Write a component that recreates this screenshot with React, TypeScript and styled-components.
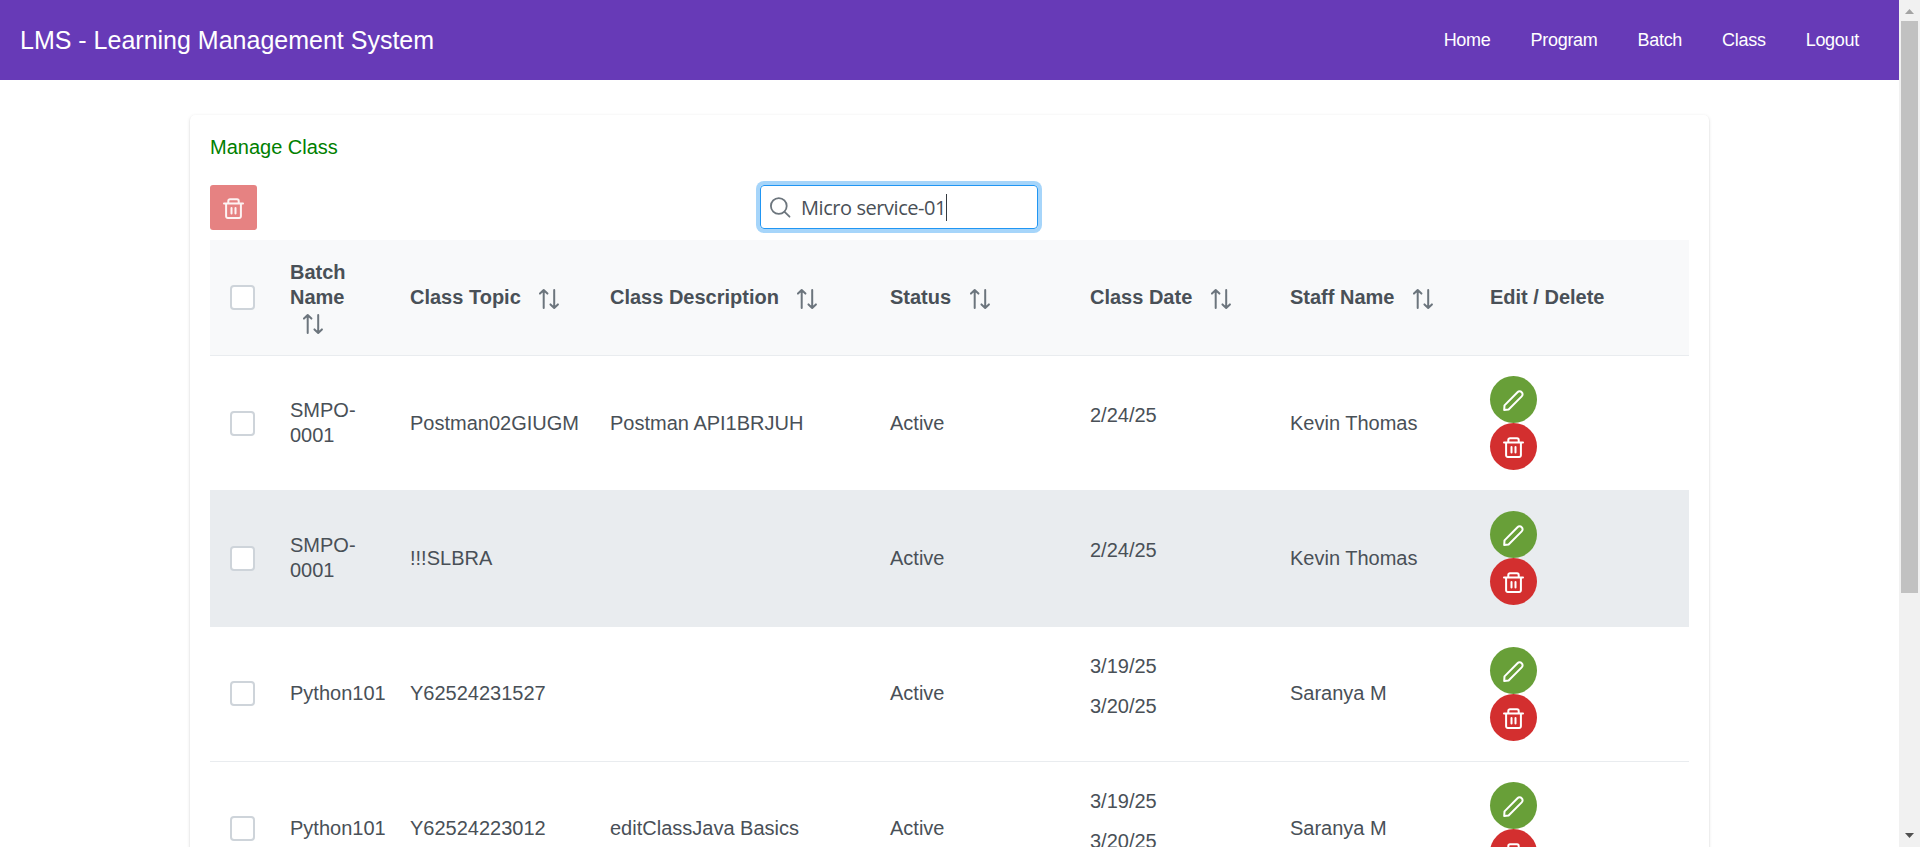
import React from 'react';
import styled, { createGlobalStyle } from 'styled-components';

const GlobalStyle = createGlobalStyle`
  * { box-sizing: border-box; }
  html, body { margin: 0; height: 100%; overflow: hidden; background: #fff; }
  body { font-family: 'Liberation Sans', Arial, sans-serif; font-size: 20px; color: #495057; }
`;

const Shell = styled.div`
  display: flex;
  width: 100%;
  height: 100vh;
  overflow: hidden;
`;

const Page = styled.div`
  flex: 1;
  min-width: 0;
  height: 100%;
  overflow: hidden;
`;

const Toolbar = styled.header`
  display: flex;
  align-items: center;
  justify-content: space-between;
  height: 80px;
  padding: 0 20px;
  background: #673ab7;
  color: #fff;
`;

const Brand = styled.h1`
  margin: 0;
  font-size: 25px;
  font-weight: 400;
  line-height: 40px;
  white-space: nowrap;
`;

const Nav = styled.nav`
  display: flex;
`;

const NavLink = styled.a`
  padding: 0 20px;
  font-size: 18px;
  letter-spacing: -0.29px;
  line-height: 45px;
  white-space: nowrap;
`;

const Card = styled.main`
  width: 1519px;
  height: 1100px;
  margin: 35px 0 0 190px;
  padding: 20px;
  border-radius: 5px;
  background: #fff;
  box-shadow: 0 2.5px 1.25px -1.25px rgba(0, 0, 0, 0.2), 0 1.25px 1.25px rgba(0, 0, 0, 0.14), 0 1.25px 3.75px rgba(0, 0, 0, 0.12);
`;

const CardTitle = styled.div`
  height: 50px;
  color: green;
  line-height: 24px;
`;

const Actions = styled.div`
  display: flex;
  align-items: flex-start;
  height: 55px;
`;

const BulkDelete = styled.button`
  display: flex;
  align-items: center;
  justify-content: center;
  width: 47px;
  height: 45px;
  padding: 1px 0 0;
  border: 0;
  border-radius: 3px;
  background: #e68282;
  color: #fdf3f3;
`;

const SearchBox = styled.label`
  display: flex;
  align-items: center;
  width: 278px;
  height: 44px;
  margin-left: 503px;
  padding-left: 9px;
  border: 1px solid #2196f3;
  border-radius: 4px;
  box-shadow: 0 0 0 4px #a6d5fa;
  color: #6c757d;
`;

const SearchText = styled.span`
  margin-left: 10px;
  padding-top: 2px;
  color: #495057;
  font-family: 'Open Sans', 'Noto Sans', sans-serif;
  font-size: 20px;
  letter-spacing: -0.44px;
  line-height: 26px;
  white-space: nowrap;
`;

const Caret = styled.i`
  width: 1px;
  height: 27px;
  background: #343a40;
`;

const columns = '60px 120px 200px 280px 200px 200px 200px 219px';

const HeadRow = styled.div`
  display: grid;
  grid-template-columns: ${columns};
  align-items: center;
  height: 116px;
  background: #f8f9fa;
  border-bottom: 1px solid #e9ecef;
  font-weight: 700;
`;

const Cell = styled.div`
  padding: 0 20px;
  line-height: 25px;
`;

const Dates = styled.div`
  display: flex;
  flex-direction: column;
  gap: 15px;
  padding: 0 20px 16px;
  line-height: 25px;
`;

const Row = styled.div<{ $height: number; $lift: number; $active?: boolean }>`
  display: grid;
  grid-template-columns: ${columns};
  align-items: center;
  height: ${(p) => p.$height}px;
  padding-bottom: ${(p) => p.$height - 135}px;
  border-bottom: 1px solid #e9ecef;
  background: ${(p) => (p.$active ? '#e9ecef' : '#fff')};

  ${Cell} {
    margin-bottom: ${(p) => p.$lift * 2}px;
  }
`;

const HeadCell = styled(Cell)<{ $wrap?: boolean }>`
  padding-right: 0;
  white-space: ${(p) => (p.$wrap ? 'normal' : 'nowrap')};
  width: ${(p) => (p.$wrap ? '100px' : 'auto')};
`;

const SortIcon = styled.svg<{ $indent: number }>`
  width: 20px;
  height: 20px;
  margin-left: ${(p) => p.$indent}px;
  vertical-align: -5px;
  color: #6c757d;
`;

const Checkbox = styled.div`
  width: 25px;
  height: 25px;
  border: 2px solid #ced4da;
  border-radius: 4px;
  background: #fff;
`;

const Buttons = styled.div`
  padding: 0 20px;
`;

const RoundButton = styled.button<{ $tone: string }>`
  display: flex;
  align-items: center;
  justify-content: center;
  width: 47px;
  height: 47px;
  padding: 1px 0 0;
  border: 0;
  border-radius: 50%;
  background: ${(p) => p.$tone};
  color: #fff;
`;

const ScrollTrack = styled.aside`
  display: flex;
  flex-direction: column;
  align-items: center;
  width: 21px;
  height: 100%;
  background: #f1f1f1;
`;

const ScrollThumb = styled.div`
  width: 17px;
  height: 572px;
  background: #c1c1c1;
`;

const ScrollArrow = styled.svg`
  display: block;
  width: 21px;
  height: 21px;
`;

const Spacer = styled.div`
  flex: 1;
`;

const TrashIcon = () => (
  <svg width="21" height="21" viewBox="0 0 21 21" fill="none" stroke="currentColor" strokeWidth="2" strokeLinecap="round" strokeLinejoin="round">
    <path d="M1 5.5h19M3.1 5.5v12.8a1.7 1.7 0 0 0 1.7 1.7h11.4a1.7 1.7 0 0 0 1.7-1.7V5.5M5.3 5.5V2.9A1.7 1.7 0 0 1 7 1.2h7a1.7 1.7 0 0 1 1.7 1.7v2.6" />
    <path d="M8.5 10v5.4M12.5 10v5.4" />
  </svg>
);

const PencilIcon = () => (
  <svg width="21" height="21" viewBox="0 0 21 21" fill="none" stroke="currentColor" strokeWidth="2" strokeLinejoin="round">
    <path d="M1.5 15.4L14.5 2.2a2.9 2.9 0 0 1 4.2 0a2.9 2.9 0 0 1 0 4.2L5.6 19.5L1.2 20Z" />
  </svg>
);

const SearchIcon = () => (
  <svg width="21" height="21" viewBox="0 0 21 21" fill="none" stroke="currentColor" strokeWidth="1.8" strokeLinecap="round">
    <circle cx="8.8" cy="9" r="7.9" />
    <path d="M14.6 14.8L19.5 19.7" />
  </svg>
);

const Sort = ({ indent = 18.4 }: { indent?: number }) => (
  <SortIcon $indent={indent} viewBox="0 0 20 20" fill="none" stroke="currentColor" strokeWidth="2" strokeLinecap="round" strokeLinejoin="round">
    <path d="M4.7 19V1.2M1 4.6L4.7 1.1L8.4 4.6M15.2 1V18.8M11.5 15.4L15.2 18.9L18.9 15.4" />
  </SortIcon>
);

type Entry = {
  batch: string;
  topic: string;
  description: string;
  dates: string[];
  staff: string;
  height: number;
  lift: number;
  active?: boolean;
};

const entries: Entry[] = [
  { batch: 'SMPO-0001', topic: 'Postman02GIUGM', description: 'Postman API1BRJUH', dates: ['2/24/25'], staff: 'Kevin Thomas', height: 135, lift: 0 },
  { batch: 'SMPO-0001', topic: '!!!SLBRA', description: '', dates: ['2/24/25'], staff: 'Kevin Thomas', height: 136, lift: 0, active: true },
  { batch: 'Python101', topic: 'Y62524231527', description: '', dates: ['3/19/25', '3/20/25'], staff: 'Saranya M', height: 135, lift: 1 },
  { batch: 'Python101', topic: 'Y62524223012', description: 'editClassJava Basics', dates: ['3/19/25', '3/20/25'], staff: 'Saranya M', height: 135, lift: 1 },
];

const sortable = ['Class Topic', 'Class Description', 'Status', 'Class Date', 'Staff Name'];

export default function App() {
  return (
    <Shell>
      <GlobalStyle />
      <Page>
        <Toolbar>
          <Brand>LMS - Learning Management System</Brand>
          <Nav>
            {['Home', 'Program', 'Batch', 'Class', 'Logout'].map((item) => (
              <NavLink key={item}>{item}</NavLink>
            ))}
          </Nav>
        </Toolbar>
        <Card>
          <CardTitle>Manage Class</CardTitle>
          <Actions>
            <BulkDelete aria-label="Delete selected"><TrashIcon /></BulkDelete>
            <SearchBox>
              <SearchIcon />
              <SearchText>Micro service-01</SearchText>
              <Caret />
            </SearchBox>
          </Actions>
          <HeadRow>
            <Cell><Checkbox /></Cell>
            <HeadCell $wrap>Batch Name <Sort indent={13} /></HeadCell>
            {sortable.map((label) => (
              <HeadCell key={label}>{label}<Sort /></HeadCell>
            ))}
            <HeadCell>Edit / Delete</HeadCell>
          </HeadRow>
          {entries.map((entry) => (
            <Row key={entry.topic} $height={entry.height} $lift={entry.lift} $active={entry.active}>
              <Cell><Checkbox /></Cell>
              <Cell>{entry.batch}</Cell>
              <Cell>{entry.topic}</Cell>
              <Cell>{entry.description}</Cell>
              <Cell>Active</Cell>
              <Dates>
                {entry.dates.map((date) => (
                  <span key={date}>{date}</span>
                ))}
              </Dates>
              <Cell>{entry.staff}</Cell>
              <Buttons>
                <RoundButton $tone="#689f38" aria-label="Edit"><PencilIcon /></RoundButton>
                <RoundButton $tone="#d32f2f" aria-label="Delete"><TrashIcon /></RoundButton>
              </Buttons>
            </Row>
          ))}
        </Card>
      </Page>
      <ScrollTrack>
        <ScrollArrow viewBox="0 0 21 21"><path d="M6 14L10.5 9L15 14Z" fill="#a3a3a3" /></ScrollArrow>
        <ScrollThumb />
        <Spacer />
        <ScrollArrow viewBox="0 0 21 21"><path d="M6 7L10.5 12L15 7Z" fill="#505050" /></ScrollArrow>
      </ScrollTrack>
    </Shell>
  );
}
